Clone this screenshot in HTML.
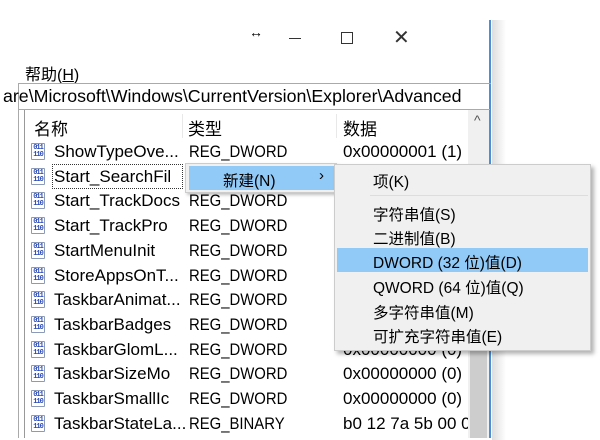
<!DOCTYPE html>
<html><head><meta charset="utf-8"><style>
*{margin:0;padding:0;box-sizing:border-box}
body{width:600px;height:438px;background:#fff;position:relative;overflow:hidden;font-family:"Liberation Sans","Noto Sans CJK SC",sans-serif;font-size:17px;color:#000}
.a{position:absolute;white-space:nowrap}
.t{transform:scaleX(0.875);transform-origin:left center}
.ic{position:absolute;width:14px;height:17px;border:1px solid #8a9ab8;border-radius:1px;background:#fff;font:bold 7px/7px "Liberation Mono",monospace;color:#2848b8;text-align:center;padding-top:1px;letter-spacing:-1px}
.m{font-size:15.5px}
</style></head><body>
<div class="a" style="left:492px;top:20px;width:14px;height:420px;background:linear-gradient(90deg,#ddd,#fff)"></div>
<div class="a" style="left:489px;top:20px;width:2px;height:418px;background:#4a8fd8"></div>
<div class="a" style="left:249px;top:24px;font-size:14px">↔</div>
<div class="a" style="left:289px;top:38px;width:12px;height:1px;background:#333"></div>
<div class="a" style="left:341px;top:32px;width:12px;height:12px;border:1px solid #333"></div>
<div class="a" style="left:393px;top:29px;font-size:20px;color:#333;line-height:18px">✕</div>
<div class="a" style="left:25px;top:61px;font-size:16px">帮助(<u>H</u>)</div>
<div class="a" style="left:18px;top:83px;width:473px;height:1px;background:#aaa"></div>
<div class="a" style="left:18px;top:84px;width:1px;height:354px;background:#aaa"></div>
<div class="a" style="left:18px;top:109px;width:472px;height:1px;background:#aaa"></div>
<div class="a" style="left:3px;top:86px;font-size:17.8px">are\Microsoft\Windows\CurrentVersion\Explorer\Advanced</div>
<div class="a" style="left:24px;top:110px;width:1px;height:328px;background:#999"></div>
<div class="a" style="left:468px;top:110px;width:21px;height:328px;background:#f0f0f0"></div>
<div class="a" style="left:470px;top:170px;width:17px;height:268px;background:#cdcdcd"></div>
<div class="a" style="left:474px;top:112px;font-size:14px;color:#555">^</div>
<div class="a" style="left:182px;top:114px;width:1px;height:24px;background:#e8e8e8"></div>
<div class="a" style="left:336px;top:114px;width:1px;height:24px;background:#e8e8e8"></div>
<div class="a" style="left:34px;top:115px">名称</div>
<div class="a" style="left:188px;top:115px">类型</div>
<div class="a" style="left:343px;top:115px">数据</div>
<div id="rows"></div>
<script>
var r=[["ShowTypeOve...","REG_DWORD","0x00000001 (1)"],["Start_SearchFil","",""],["Start_TrackDocs","REG_DWORD",""],["Start_TrackPro","REG_DWORD",""],["StartMenuInit","REG_DWORD",""],["StoreAppsOnT...","REG_DWORD",""],["TaskbarAnimat...","REG_DWORD",""],["TaskbarBadges","REG_DWORD",""],["TaskbarGlomL...","REG_DWORD","0x00000000 (0)"],["TaskbarSizeMo","REG_DWORD","0x00000000 (0)"],["TaskbarSmallIc","REG_DWORD","0x00000000 (0)"],["TaskbarStateLa...","REG_BINARY","b0 12 7a 5b 00 0"]];
var h="";r.forEach(function(x,i){var y=142+i*24.7;h+='<div class="ic" style="left:31px;top:'+(y+1)+'px">011<br>110</div><div class="a" style="left:54px;top:'+y+'px">'+x[0]+'</div><div class="a t" style="left:189px;top:'+y+'px">'+x[1]+'</div><div class="a" style="left:343px;top:'+y+'px;width:125px;overflow:hidden">'+x[2]+'</div>';});
document.getElementById("rows").innerHTML=h;
</script>
<div class="a" style="left:52px;top:164px;width:131px;height:25px;border:1px dotted #333"></div>
<div class="a" style="left:185px;top:163px;width:152px;height:30px;background:#f0f0f0;border:1px solid #ccc;box-shadow:2px 2px 3px rgba(0,0,0,.25)"></div>
<div class="a" style="left:189px;top:166px;width:146px;height:24px;background:#91c9f7"></div>
<div class="a m" style="left:223px;top:169px">新建(N)</div>
<div class="a" style="left:319px;top:167px;font-size:15px">›</div>
<div class="a" style="left:334px;top:164px;width:257px;height:187px;background:#f0f0f0;border:1px solid #ccc;box-shadow:3px 3px 4px rgba(0,0,0,.3)"></div>
<div class="a" style="left:370px;top:195px;width:218px;height:1px;background:#ddd"></div>
<div class="a" style="left:337px;top:248px;width:251px;height:24px;background:#91c9f7"></div>
<div class="a m" style="left:373px;top:170px">项(K)</div>
<div class="a m" style="left:373px;top:203px">字符串值(S)</div>
<div class="a m" style="left:373px;top:227px">二进制值(B)</div>
<div class="a m" style="left:373px;top:251px">DWORD (32 位)值(D)</div>
<div class="a m" style="left:373px;top:276px">QWORD (64 位)值(Q)</div>
<div class="a m" style="left:373px;top:301px">多字符串值(M)</div>
<div class="a m" style="left:373px;top:325px">可扩充字符串值(E)</div>
</body></html>
